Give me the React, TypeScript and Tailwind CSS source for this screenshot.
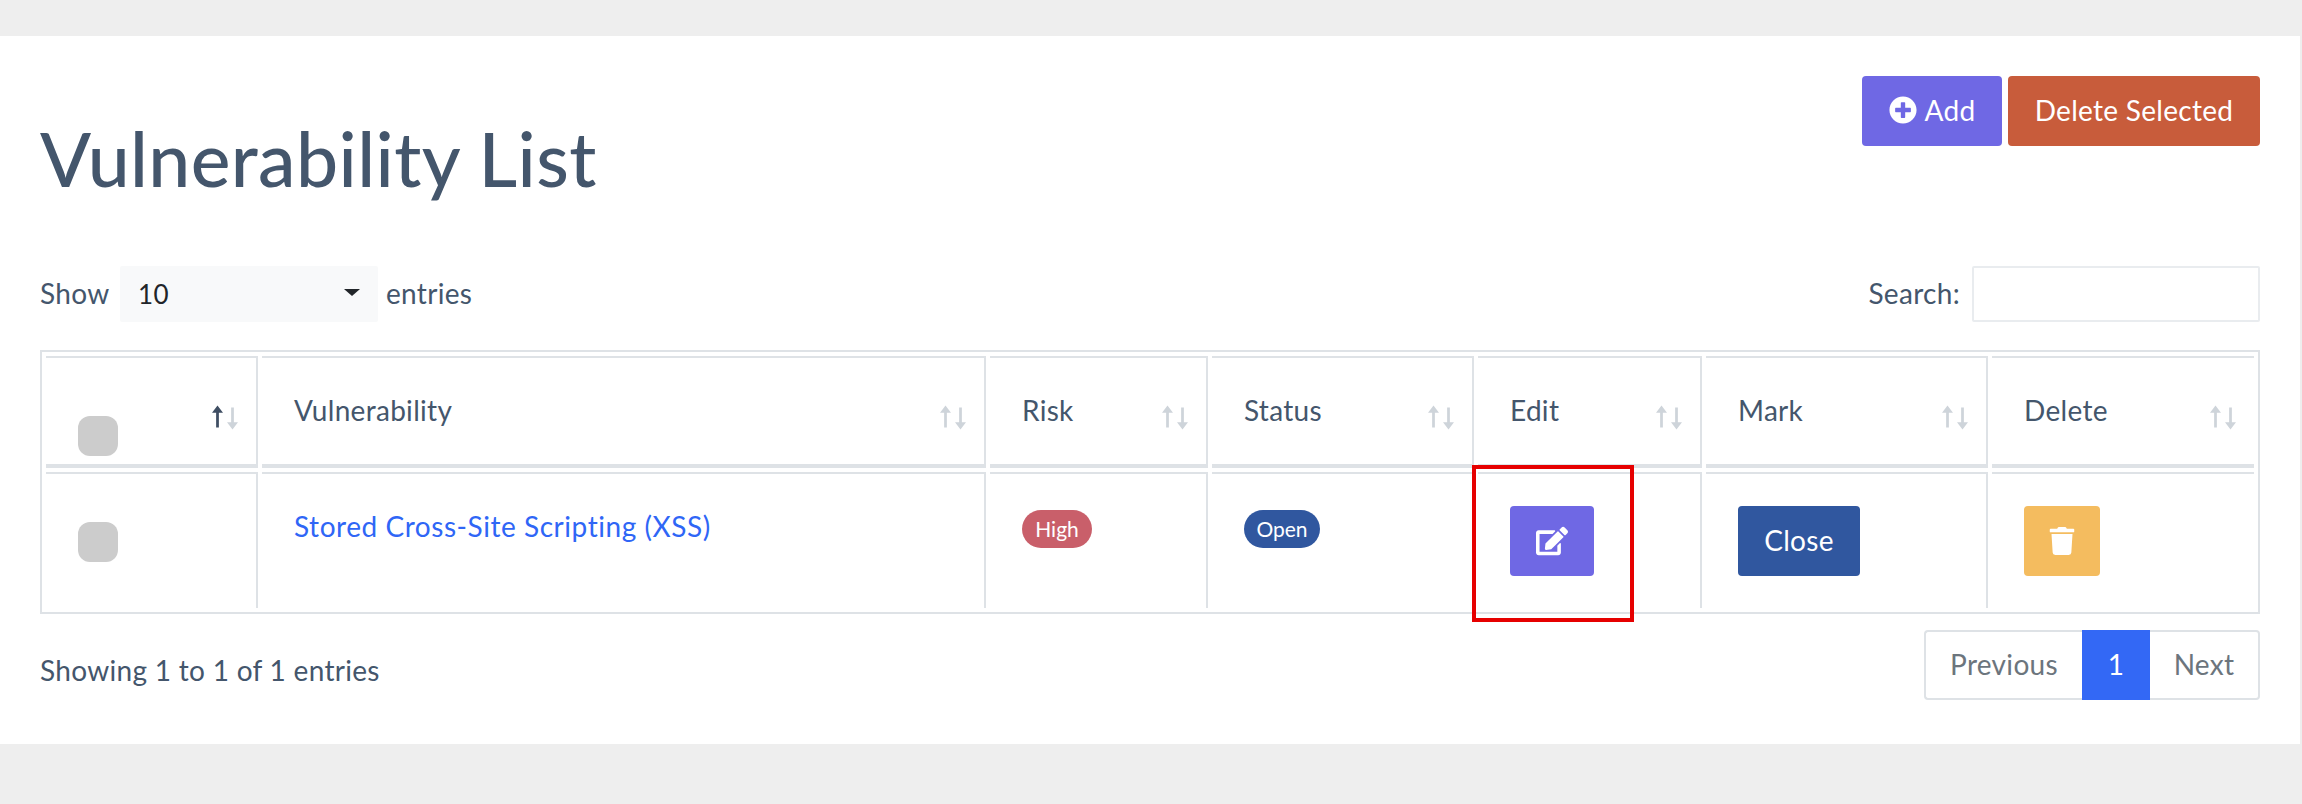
import { FaEdit, FaPlusCircle, FaTrash } from "react-icons/fa";

function SortArrows({ active = false }: { active?: boolean }) {
  return (
    <span className="absolute top-[47px] right-[18px] flex gap-[4px]">
      <svg viewBox="0 0 12 24" className={`h-[23px] w-[11px] ${active ? "fill-[#3f4e63]" : "fill-[#ced4da]"}`}>
        <path d="M6 0 12 8H7.5V24H4.5V8H0Z" />
      </svg>
      <svg viewBox="0 0 12 24" className="mt-[2px] h-[23px] w-[11px] fill-[#ced4da]">
        <path d="M6 24 0 16H4.5V0H7.5V16H12Z" />
      </svg>
    </span>
  );
}

function HeadCell({ label, last = false }: { label: string; last?: boolean }) {
  return (
    <th
      className={`relative h-[112px] border-t-2 border-b-4 border-[#dee2e6] p-0 pt-[28px] pl-[32px] text-left align-top text-[28px] leading-[48px] font-normal tracking-[0.3px] ${
        last ? "" : "border-r-2"
      }`}
    >
      {label}
      <SortArrows />
    </th>
  );
}

function Checkbox() {
  return <div className="h-[40px] w-[40px] rounded-[12px] bg-[#cccccc]" />;
}

export default function App() {
  return (
    <div className="h-[804px] bg-[#eeeeee] pt-[36px] font-['Lato',sans-serif] text-[#44566c]">
      <div className="relative mr-[2px] h-[708px] bg-white px-[40px] pt-[40px]">
        <div className="flex h-[190px] items-start justify-between">
          <h1 className="mt-[34px] text-[75px] leading-[96px] font-medium tracking-[0.4px]">Vulnerability List</h1>
          <div className="flex gap-[6px]">
            <button className="flex h-[70px] w-[140px] items-center justify-center gap-[8px] rounded-[4px] bg-[#6f68e4] pb-[2px] text-[28px] tracking-[0.3px] text-white">
              <FaPlusCircle className="h-[28px] w-[28px]" />
              Add
            </button>
            <button className="h-[70px] w-[252px] rounded-[4px] bg-[#c85c3b] pb-[2px] text-[28px] tracking-[0.3px] text-white">
              Delete Selected
            </button>
          </div>
        </div>

        <div className="flex h-[56px] items-center justify-between text-[28px] tracking-[0.3px]">
          <div className="flex items-center gap-[8px]">
            <span className="-mt-[2px] w-[72px]">Show</span>
            <div className="relative h-[56px] w-[258px]">
              <select className="h-full w-full appearance-none rounded-[2px] bg-[#f8f9fa] pl-[18px] text-[26px] text-[#212529] outline-none">
                <option>10</option>
              </select>
              <span className="absolute top-[23px] right-[18px] h-0 w-0 border-x-[8px] border-t-[7px] border-x-transparent border-t-[#212529]" />
            </div>
            <span className="-mt-[2px]">entries</span>
          </div>
          <div className="flex items-center gap-[12px]">
            <span className="-mt-[2px]">Search:</span>
            <input className="h-[56px] w-[288px] rounded-[2px] border-2 border-[#e9ecef] bg-white outline-none" />
          </div>
        </div>

        <div className="mt-[28px] border-2 border-[#dee2e6]">
          <table className="w-full table-fixed border-separate border-spacing-[4px]">
            <colgroup>
              <col className="w-[212px]" />
              <col className="w-[724px]" />
              <col className="w-[218px]" />
              <col className="w-[262px]" />
              <col className="w-[224px]" />
              <col className="w-[282px]" />
              <col className="w-[262px]" />
            </colgroup>
            <thead>
              <tr>
                <th className="relative h-[112px] border-t-2 border-r-2 border-b-4 border-[#dee2e6] p-0 pt-[58px] pl-[32px] align-top">
                  <Checkbox />
                  <SortArrows active />
                </th>
                <HeadCell label="Vulnerability" />
                <HeadCell label="Risk" />
                <HeadCell label="Status" />
                <HeadCell label="Edit" />
                <HeadCell label="Mark" />
                <HeadCell label="Delete" last />
              </tr>
            </thead>
            <tbody>
              <tr className="h-[136px]">
                <td className="border-t-2 border-r-2 border-[#dee2e6] p-0 pt-[48px] pl-[32px] align-top">
                  <Checkbox />
                </td>
                <td className="border-t-2 border-r-2 border-[#dee2e6] p-0 pt-[28px] pl-[32px] align-top">
                  <a className="text-[28px] leading-[48px] tracking-[0.55px] text-[#2f66f6]">Stored Cross-Site Scripting (XSS)</a>
                </td>
                <td className="border-t-2 border-r-2 border-[#dee2e6] p-0 pt-[36px] pl-[32px] align-top">
                  <span className="inline-flex h-[38px] w-[70px] items-center justify-center rounded-full bg-[#c95f6a] text-[21px] text-white">
                    High
                  </span>
                </td>
                <td className="border-t-2 border-r-2 border-[#dee2e6] p-0 pt-[36px] pl-[32px] align-top">
                  <span className="inline-flex h-[38px] w-[76px] items-center justify-center rounded-full bg-[#30579f] text-[21px] text-white">
                    Open
                  </span>
                </td>
                <td className="border-t-2 border-r-2 border-[#dee2e6] p-0 pt-[32px] pl-[32px] align-top">
                  <button className="flex h-[70px] w-[84px] items-center justify-center rounded-[4px] bg-[#6f68e4] text-white">
                    <FaEdit className="h-[32px] w-[32px]" />
                  </button>
                </td>
                <td className="border-t-2 border-r-2 border-[#dee2e6] p-0 pt-[32px] pl-[32px] align-top">
                  <button className="h-[70px] w-[122px] rounded-[4px] bg-[#30579f] pb-[2px] text-[28px] tracking-[0.3px] text-white">Close</button>
                </td>
                <td className="border-t-2 border-[#dee2e6] p-0 pt-[32px] pl-[32px] align-top">
                  <button className="flex h-[70px] w-[76px] items-center justify-center rounded-[4px] bg-[#f4bc5f] text-[28px] text-white">
                    <FaTrash />
                  </button>
                </td>
              </tr>
            </tbody>
          </table>
        </div>

        <div className="mt-[16px] flex items-start justify-between text-[28px] tracking-[0.3px]">
          <span className="mt-[16px] leading-[48px]">Showing 1 to 1 of 1 entries</span>
          <div className="flex h-[70px] items-stretch text-[#6c757d]">
            <span className="flex w-[158px] items-center justify-center rounded-l-[4px] border-2 border-r-0 border-[#dee2e6] pb-[2px]">Previous</span>
            <span className="flex w-[68px] items-center justify-center bg-[#3368f5] pb-[2px] text-white">1</span>
            <span className="flex w-[110px] items-center justify-center rounded-r-[4px] border-2 border-l-0 border-[#dee2e6] pb-[2px]">Next</span>
          </div>
        </div>

        {/* annotation box drawn over the edit button */}
        <div className="absolute top-[429px] left-[1472px] h-[157px] w-[162px] border-4 border-[#e60000]" />
      </div>
    </div>
  );
}
